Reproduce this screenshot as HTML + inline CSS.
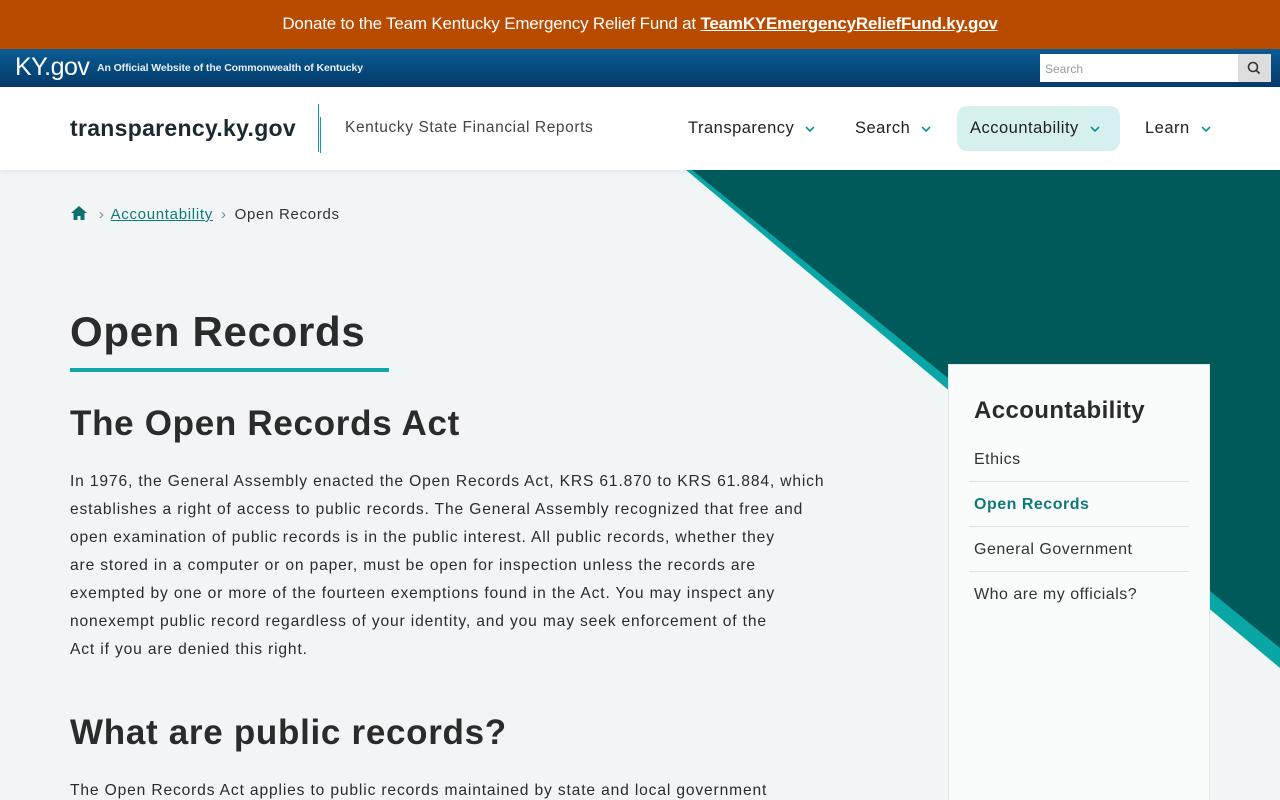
<!DOCTYPE html>
<html><head><meta charset="utf-8"><style>
*{margin:0;padding:0;box-sizing:border-box}
html,body{width:1280px;height:800px;overflow:hidden}
body{background:#f1f5f6;font-family:"Liberation Sans",sans-serif;color:#2b2b2b;position:relative}
.donate{height:49px;background:#b84b00;color:#fff;text-align:center;font-size:17px;line-height:48px;letter-spacing:-.2px}
.donate b{text-decoration:underline}
.kybar{height:38px;background:linear-gradient(#0a5c94,#043a6a);position:relative;color:#fff}
.kybar .logo{position:absolute;left:15px;top:4px;font-size:25px;letter-spacing:-.5px}
.kybar .off{position:absolute;left:97px;top:13px;font-size:10.5px;font-weight:bold;color:#e8eef4;letter-spacing:-.1px}
.kybar .sb{position:absolute;left:1040px;top:5px;width:198px;height:28px;background:#fff;font-size:12px;color:#999;padding:8px 5px}
.kybar .sbtn{position:absolute;left:1238px;top:5px;width:33px;height:28px;background:#ddd}
.hdr{height:83px;background:#fff;position:relative;box-shadow:0 2px 4px rgba(0,0,0,.05)}
.site{position:absolute;left:70px;top:28px;font-size:23px;font-weight:bold;color:#1b2a30;letter-spacing:.3px}
.vl{position:absolute;left:318px;top:17px;width:1px;height:48px;background:#1a9aa0}
.vl2{position:absolute;left:320px;top:30px;width:1px;height:36px;background:#1a9aa0}
.sub{position:absolute;left:345px;top:32px;font-size:15.5px;color:#444;letter-spacing:.6px}
.nav{position:absolute;top:19px;height:45px;font-size:16.5px;color:#222;line-height:45px;letter-spacing:.5px}
.nav svg{margin-left:10px;vertical-align:middle}
.act{background:#d6f0f0;border-radius:10px;padding:0 13px;width:163px}
.crumb{position:absolute;left:70px;top:205px;font-size:15px;color:#333;letter-spacing:.7px}
.crumb a{color:#0f7a7a;text-decoration:underline}
h1{position:absolute;left:70px;top:308px;font-size:42px;font-weight:bold;color:#2b2b2b;letter-spacing:.7px}
.ul{position:absolute;left:70px;top:368px;width:319px;height:4px;background:#0fa6a6}
h2{position:absolute;left:70px;font-size:35px;font-weight:bold;color:#2b2b2b;letter-spacing:.7px}
p{position:absolute;left:70px;white-space:nowrap;font-size:15.6px;line-height:28px;color:#2b2b2b;letter-spacing:.85px}
.card{position:absolute;left:948px;top:364px;width:262px;height:436px;background:#fafbfb;border:1px solid #e3e8ea;border-bottom:none}
.card h3{position:absolute;left:25px;top:32px;font-size:24px;font-weight:bold;color:#2b2b2b;letter-spacing:.4px}
.card .it{position:absolute;left:20px;width:220px;height:45px;border-bottom:1px solid #e0e0e0;font-size:16px;color:#333;padding-left:5px;line-height:45px;letter-spacing:.5px}
</style></head><body>
<div class="donate">Donate to the Team Kentucky Emergency Relief Fund at <b>TeamKYEmergencyReliefFund.ky.gov</b></div>
<div class="kybar"><span class="logo">KY.gov</span><span class="off">An Official Website of the Commonwealth of Kentucky</span><div class="sb">Search</div><div class="sbtn"><svg width="33" height="28"><circle cx="15" cy="13" r="4.5" fill="none" stroke="#333" stroke-width="1.6"/><line x1="18.5" y1="16.5" x2="21.5" y2="19.5" stroke="#333" stroke-width="1.8"/></svg></div></div>
<div class="hdr">
<div class="site">transparency.ky.gov</div><div class="vl"></div><div class="vl2"></div>
<div class="sub">Kentucky State Financial Reports</div>
<div class="nav" style="left:688px">Transparency<svg width="12" height="8"><path d="M2 2l4 4 4-4" fill="none" stroke="#0f8f8f" stroke-width="1.6"/></svg></div>
<div class="nav" style="left:855px">Search<svg width="12" height="8"><path d="M2 2l4 4 4-4" fill="none" stroke="#0f8f8f" stroke-width="1.6"/></svg></div>
<div class="nav act" style="left:957px">Accountability<svg width="12" height="8"><path d="M2 2l4 4 4-4" fill="none" stroke="#0f8f8f" stroke-width="1.6"/></svg></div>
<div class="nav" style="left:1145px">Learn<svg width="12" height="8"><path d="M2 2l4 4 4-4" fill="none" stroke="#0f8f8f" stroke-width="1.6"/></svg></div>
</div>
<svg style="position:absolute;left:0;top:170px" width="1280" height="630"><polygon points="686,0 1280,0 1280,498" fill="#0aa5a5"/><polygon points="692,0 1280,0 1280,478" fill="#005a5a"/></svg>
<div class="crumb"><svg width="18" height="16" style="vertical-align:-2px"><path d="M9 1L1 8h2.5v7h4v-4h3v4h4V8H17z" fill="#0f6f6f"/></svg> <span style="color:#888;margin:0 6px">›</span><a>Accountability</a><span style="color:#888;margin:0 8px">›</span>Open Records</div>
<h1>Open Records</h1><div class="ul"></div>
<h2 style="top:404px">The Open Records Act</h2>
<p style="top:468px">In 1976, the General Assembly enacted the Open Records Act, KRS 61.870 to KRS 61.884, which<br>establishes a right of access to public records. The General Assembly recognized that free and<br>open examination of public records is in the public interest. All public records, whether they<br>are stored in a computer or on paper, must be open for inspection unless the records are<br>exempted by one or more of the fourteen exemptions found in the Act. You may inspect any<br>nonexempt public record regardless of your identity, and you may seek enforcement of the<br>Act if you are denied this right.</p>
<h2 style="top:713px">What are public records?</h2>
<p style="top:777px">The Open Records Act applies to public records maintained by state and local government</p>
<div class="card"><h3>Accountability</h3>
<div class="it" style="top:72px">Ethics</div>
<div class="it" style="top:117px;color:#0f7a7a;font-weight:bold">Open Records</div>
<div class="it" style="top:162px">General Government</div>
<div class="it" style="top:207px;border:none">Who are my officials?</div>
</div>
</body></html>
